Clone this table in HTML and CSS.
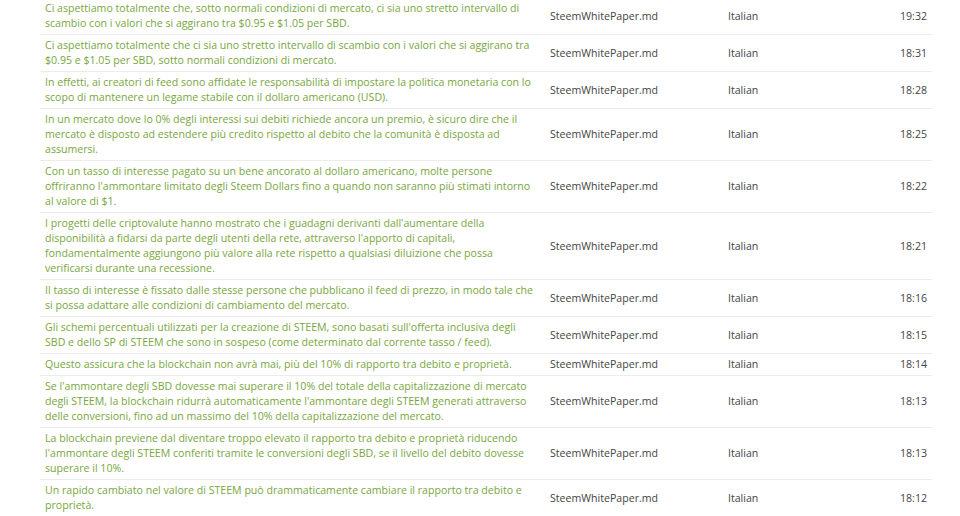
FILE: index.html
```html
<!DOCTYPE html>
<html lang="it">
<head>
<meta charset="utf-8">
<link rel="stylesheet" href="styles.css">
</head>
<body>
<div class="page">
<table class="log">
<colgroup><col class="c-text"><col class="c-file"><col class="c-lang"><col class="c-time"></colgroup>
<tbody>
<tr><td class="txt">Ci aspettiamo totalmente che, sotto normali condizioni di mercato, ci sia uno stretto intervallo di scambio con i valori che si aggirano tra $0.95 e $1.05 per SBD.</td><td>SteemWhitePaper.md</td><td>Italian</td><td class="time">19:32</td></tr>
<tr><td class="txt">Ci aspettiamo totalmente che ci sia uno stretto intervallo di scambio con i valori che si aggirano tra $0.95 e $1.05 per SBD, sotto normali condizioni di mercato.</td><td>SteemWhitePaper.md</td><td>Italian</td><td class="time">18:31</td></tr>
<tr><td class="txt">In effetti, ai creatori di feed sono affidate le responsabilità di impostare la politica monetaria con lo scopo di mantenere un legame stabile con il dollaro americano (USD).</td><td>SteemWhitePaper.md</td><td>Italian</td><td class="time">18:28</td></tr>
<tr><td class="txt">In un mercato dove lo 0% degli interessi sui debiti richiede ancora un premio, è sicuro dire che il mercato è disposto ad estendere più credito rispetto al debito che la comunità è disposta ad assumersi.</td><td>SteemWhitePaper.md</td><td>Italian</td><td class="time">18:25</td></tr>
<tr><td class="txt">Con un tasso di interesse pagato su un bene ancorato al dollaro americano, molte persone offriranno l'ammontare limitato degli Steem Dollars fino a quando non saranno più stimati intorno al valore di $1.</td><td>SteemWhitePaper.md</td><td>Italian</td><td class="time">18:22</td></tr>
<tr><td class="txt">I progetti delle criptovalute hanno mostrato che i guadagni derivanti dall'aumentare della disponibilità a fidarsi da parte degli utenti della rete, attraverso l'apporto di capitali, fondamentalmente aggiungono più valore alla rete rispetto a qualsiasi diluizione che possa verificarsi durante una recessione.</td><td>SteemWhitePaper.md</td><td>Italian</td><td class="time">18:21</td></tr>
<tr><td class="txt">Il tasso di interesse è fissato dalle stesse persone che pubblicano il feed di prezzo, in modo tale che si possa adattare alle condizioni di cambiamento del mercato.</td><td>SteemWhitePaper.md</td><td>Italian</td><td class="time">18:16</td></tr>
<tr><td class="txt">Gli schemi percentuali utilizzati per la creazione di STEEM, sono basati sull'offerta inclusiva degli SBD e dello SP di STEEM che sono in sospeso (come determinato dal corrente tasso / feed).</td><td>SteemWhitePaper.md</td><td>Italian</td><td class="time">18:15</td></tr>
<tr><td class="txt">Questo assicura che la blockchain non avrà mai, più del 10% di rapporto tra debito e proprietà.</td><td>SteemWhitePaper.md</td><td>Italian</td><td class="time">18:14</td></tr>
<tr><td class="txt">Se l'ammontare degli SBD dovesse mai superare il 10% del totale della capitalizzazione di mercato degli STEEM, la blockchain ridurrà automaticamente l'ammontare degli STEEM generati attraverso delle conversioni, fino ad un massimo del 10% della capitalizzazione del mercato.</td><td>SteemWhitePaper.md</td><td>Italian</td><td class="time">18:13</td></tr>
<tr><td class="txt">La blockchain previene dal diventare troppo elevato il rapporto tra debito e proprietà riducendo l'ammontare degli STEEM conferiti tramite le conversioni degli SBD, se il livello del debito dovesse superare il 10%.</td><td>SteemWhitePaper.md</td><td>Italian</td><td class="time">18:13</td></tr>
<tr><td class="txt">Un rapido cambiato nel valore di STEEM può drammaticamente cambiare il rapporto tra debito e proprietà.</td><td>SteemWhitePaper.md</td><td>Italian</td><td class="time">18:12</td></tr>
</tbody>
</table>
</div>
</body>
</html>
```

FILE: styles.css
```css
html, body {
  margin: 0;
  padding: 0;
  background: #ffffff;
}
.page {
  padding: 0 28px 0 40px;
  margin-top: -2px;
}
.log {
  width: 892px;
  border-collapse: collapse;
  table-layout: fixed;
  font-family: "Open Sans", "Noto Sans", sans-serif;
  font-size: 10.6px;
  line-height: 15px;
  color: #444444;
}
.c-text { width: 505px; }
.c-file { width: 178px; }
.c-lang { width: 150px; }
.c-time { width: 59px; }
.log td {
  padding: 3px 5px 3px 5px;
  border-bottom: 1px solid #ececec;
  vertical-align: middle;
}
.log td.txt {
  color: #78a63e;
  padding-right: 10px;
}
.log td.time {
  text-align: right;
}
```
